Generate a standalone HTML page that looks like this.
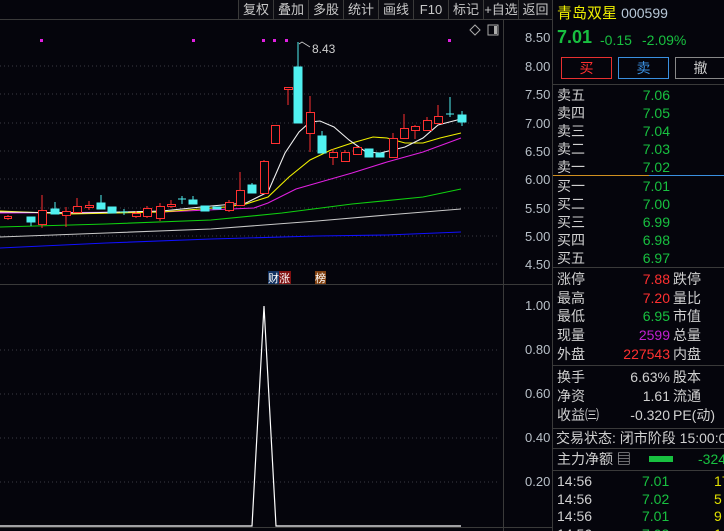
<!DOCTYPE html>
<html><head><meta charset="utf-8"><style>
*{margin:0;padding:0;box-sizing:border-box}
html,body{width:724px;height:531px;overflow:hidden}
body{background:#05050c;position:relative;font-family:"Liberation Sans","Noto Sans CJK SC",sans-serif;color:#c8c8c8}
.a{position:absolute;white-space:nowrap}
.tb{position:absolute;top:0;height:19px;font-size:13px;line-height:19px;text-align:center;color:#c8c8c8;border-left:1px solid #3a3a3a;background:#0c0c12}
.r{position:absolute;font-size:14px;line-height:16px;white-space:nowrap}
.g{color:#18c040}.rd{color:#ff3030}.w{color:#d0d0d0}
</style></head><body>
<div class="tb" style="left:238px;width:35px">复权</div>
<div class="tb" style="left:273px;width:35px">叠加</div>
<div class="tb" style="left:308px;width:35px">多股</div>
<div class="tb" style="left:343px;width:35px">统计</div>
<div class="tb" style="left:378px;width:35px">画线</div>
<div class="tb" style="left:413px;width:35px">F10</div>
<div class="tb" style="left:448px;width:35px">标记</div>
<div class="tb" style="left:483px;width:35px">+自选</div>
<div class="tb" style="left:518px;width:34px">返回</div>
<svg class="a" style="left:0;top:0" width="552" height="531">
<line x1="0" y1="19.5" x2="552" y2="19.5" stroke="#3a3a3a"/>
<line x1="503.5" y1="19" x2="503.5" y2="531" stroke="#3a3a3a"/>
<line x1="0" y1="284.5" x2="552" y2="284.5" stroke="#3a3a3a"/>
<line x1="0" y1="527.5" x2="552" y2="527.5" stroke="#3a3a3a"/>
<g stroke="#3a3a44" stroke-dasharray="1,3">
<line x1="0" y1="66" x2="500" y2="66"/><line x1="0" y1="94" x2="500" y2="94"/><line x1="0" y1="123" x2="500" y2="123"/><line x1="0" y1="151" x2="500" y2="151"/><line x1="0" y1="179" x2="500" y2="179"/><line x1="0" y1="208" x2="500" y2="208"/><line x1="0" y1="236" x2="500" y2="236"/><line x1="0" y1="264" x2="500" y2="264"/>
<line x1="0" y1="350" x2="500" y2="350"/><line x1="0" y1="394" x2="500" y2="394"/><line x1="0" y1="438" x2="500" y2="438"/><line x1="0" y1="482" x2="500" y2="482"/>
</g>
<g font-size="13" fill="#b8c0c8" font-family="Liberation Sans">
<text x="525" y="42">8.50</text><text x="525" y="71">8.00</text><text x="525" y="99">7.50</text><text x="525" y="128">7.00</text><text x="525" y="156">6.50</text><text x="525" y="184">6.00</text><text x="525" y="213">5.50</text><text x="525" y="241">5.00</text><text x="525" y="269">4.50</text>
<text x="525" y="310">1.00</text><text x="525" y="354">0.80</text><text x="525" y="398">0.60</text><text x="525" y="442">0.40</text><text x="525" y="486">0.20</text>
</g>
<g fill="#e020e0"><rect x="40" y="39" width="3" height="3"/><rect x="192" y="39" width="3" height="3"/><rect x="262" y="39" width="3" height="3"/><rect x="273" y="39" width="3" height="3"/><rect x="285" y="39" width="3" height="3"/><rect x="448" y="39" width="3" height="3"/></g>
<path d="M470 30l5 -5 5 5 -5 5z" fill="none" stroke="#aaa"/>
<rect x="488" y="25" width="10" height="10" fill="none" stroke="#aaa"/><rect x="494" y="26" width="3" height="8" fill="#aaa"/>
<text x="312" y="53" font-size="12" fill="#d0d0d0">8.43</text>
<path d="M299 44l3-2 8 5" fill="none" stroke="#ccc" stroke-width="0.8"/>
<g fill="none" stroke-width="1.1">
<polyline stroke="#1010ff" points="0,248 106,243 211,239 317,236 387,235 461,232"/>
<polyline stroke="#c8c8c8" points="0,237 106,233 211,229 317,221 387,215 461,209"/>
<polyline stroke="#10d010" points="0,227 106,224 211,220 282,213 352,204 423,197 461,189"/>
<polyline stroke="#e020e0" points="0,213 162,212 254,208 268,203 296,189 317,183 352,173 387,162 423,152 461,138"/>
<polyline stroke="#f0f000" points="0,211 70,214 162,212 225,207 246,204 268,197 289,177 310,160 331,150 352,143 373,137 387,138 405,143 423,143 440,138 461,133"/>
<polyline stroke="#f0f0f0" points="0,212 81,213 162,211 211,206 246,203 268,192 285,153 299,132 310,122 320,121 334,127 349,140 366,152 380,153 405,147 423,138 438,125 461,119"/>
</g>
<g stroke="#ff3030" fill="#05050c" stroke-width="1">
<path d="M8 215v5M42 195v33M66 207v20M77 198v14M89 201v9M136 211v7M147 206v12M160 203v18M171 200v8M229 200v12M240 172v34M264 160v34M288 88v17M310 96v56M333 149v16M345 150v12M357 146v9M393 133v25M404 114v25M415 125v14M427 117v14M438 105v18"/>
<rect x="4.5" y="216.5" width="7" height="2"/><rect x="38.5" y="210.5" width="8" height="14"/><rect x="62.5" y="211.5" width="8" height="4"/><rect x="73.5" y="206.5" width="8" height="6"/><rect x="85.5" y="205.5" width="8" height="2"/><rect x="132.5" y="213.5" width="8" height="3"/><rect x="143.5" y="208.5" width="8" height="8"/><rect x="156.5" y="206.5" width="8" height="12"/><rect x="167.5" y="204.5" width="8" height="2"/>
<rect x="225.5" y="202.5" width="8" height="8"/><rect x="236.5" y="190.5" width="8" height="15"/><rect x="260.5" y="161.5" width="8" height="32"/><rect x="271.5" y="125.5" width="8" height="18"/><rect x="284.5" y="87.5" width="8" height="2"/><rect x="306.5" y="112.5" width="8" height="21"/><rect x="329.5" y="152.5" width="8" height="5"/><rect x="341.5" y="152.5" width="8" height="9"/><rect x="353.5" y="147.5" width="8" height="7"/><rect x="389.5" y="138.5" width="8" height="19"/><rect x="400.5" y="128.5" width="8" height="10"/><rect x="411.5" y="126.5" width="8" height="4"/><rect x="423.5" y="120.5" width="8" height="10"/><rect x="434.5" y="116.5" width="8" height="7"/>
</g>
<g stroke="#50f0f0" fill="#50f0f0" stroke-width="1">
<path d="M31 217v9M55 202v12M101 195v14M112 207v6M124 209v6M120 212h8M182 196v8M178 199h8M193 196v8M205 206v5M217 207v2M252 183v10M298 42v25M322 131v22M369 149v8M380 153v4M450 97v20M446 114h8M462 111v15"/>
<rect x="27" y="217" width="8" height="5"/><rect x="51" y="209" width="8" height="5"/><rect x="97" y="203" width="8" height="6"/><rect x="108" y="207" width="8" height="6"/><rect x="189" y="200" width="8" height="4"/><rect x="201" y="206" width="8" height="5"/><rect x="213" y="207" width="8" height="2"/><rect x="248" y="185" width="8" height="8"/><rect x="294" y="67" width="8" height="56"/><rect x="318" y="136" width="8" height="17"/><rect x="365" y="149" width="8" height="8"/><rect x="376" y="153" width="8" height="4"/><rect x="458" y="115" width="8" height="7"/>
</g>
<rect x="268" y="271" width="11" height="13" fill="#103060"/><text x="268" y="282" font-size="11" fill="#fff">财</text>
<rect x="279" y="271" width="12" height="13" fill="#801010"/><text x="279" y="282" font-size="11" fill="#fff">涨</text>
<rect x="315" y="271" width="11" height="13" fill="#804010"/><text x="315" y="282" font-size="11" fill="#fff">榜</text>
<polyline fill="none" stroke="#fff" stroke-width="1.2" points="0,526 252,526 264,306 276,526 461,526"/>
</svg>
<div class="a" style="left:552px;top:0;width:1px;height:531px;background:#3a3a3a"></div>
<div class="r" style="left:557px;top:5px;font-size:15px;color:#f0f000">青岛双星 <span style="color:#b8c8d8;font-size:14px">000599</span></div>
<div class="r" style="left:557px;top:29px;font-size:18px;font-weight:bold;color:#18c040">7.01</div>
<div class="r g" style="left:600px;top:32px">-0.15</div>
<div class="r g" style="left:642px;top:32px">-2.09%</div>
<div class="a" style="left:561px;top:57px;width:51px;height:22px;border:1px solid #e83030;color:#ff3030;font-size:14px;text-align:center;line-height:20px">买</div>
<div class="a" style="left:618px;top:57px;width:51px;height:22px;border:1px solid #3a90e0;color:#3a90e0;font-size:14px;text-align:center;line-height:20px">卖</div>
<div class="a" style="left:675px;top:57px;width:51px;height:22px;border:1px solid #888;color:#ccc;font-size:14px;text-align:center;line-height:20px">撤</div>
<div class="a" style="left:553px;top:84px;width:171px;height:1px;background:#3a3a3a"></div>
<div class="a" style="left:553px;top:175px;width:96px;height:1px;background:#d09020"></div>
<div class="a" style="left:649px;top:175px;width:75px;height:1px;background:#3a90e0"></div>
<div class="a" style="left:553px;top:267px;width:171px;height:1px;background:#3a3a3a"></div>
<div class="a" style="left:553px;top:365px;width:171px;height:1px;background:#3a3a3a"></div>
<div class="a" style="left:553px;top:428px;width:171px;height:1px;background:#3a3a3a"></div>
<div class="a" style="left:553px;top:448px;width:171px;height:1px;background:#3a3a3a"></div>
<div class="a" style="left:553px;top:470px;width:171px;height:1px;background:#3a3a3a"></div>
<div class="r w" style="left:557px;top:86px;line-height:18px">卖五<br>卖四<br>卖三<br>卖二<br>卖一</div>
<div class="r g" style="left:610px;top:86px;width:60px;text-align:right;line-height:18px">7.06<br>7.05<br>7.04<br>7.03<br>7.02</div>
<div class="r w" style="left:557px;top:177px;line-height:18px">买一<br>买二<br>买三<br>买四<br>买五</div>
<div class="r g" style="left:610px;top:177px;width:60px;text-align:right;line-height:18px">7.01<br>7.00<br>6.99<br>6.98<br>6.97</div>
<div class="r w" style="left:557px;top:270px;line-height:18.7px">涨停<br>最高<br>最低<br>现量<br>外盘</div>
<div class="r" style="left:590px;top:270px;width:80px;text-align:right;line-height:18.7px"><span class="rd">7.88</span><br><span class="rd">7.20</span><br><span class="g">6.95</span><br><span style="color:#c020d0">2599</span><br><span class="rd">227543</span></div>
<div class="r w" style="left:673px;top:270px;line-height:18.7px">跌停<br>量比<br>市值<br>总量<br>内盘</div>
<div class="r w" style="left:557px;top:368px;line-height:19px">换手<br>净资<br>收益㈢</div>
<div class="r w" style="left:590px;top:368px;width:80px;text-align:right;line-height:19px">6.63%<br>1.61<br>-0.320</div>
<div class="r w" style="left:673px;top:368px;line-height:19px">股本<br>流通<br>PE(动)</div>
<div class="r w" style="left:556px;top:430px">交易状态: 闭市阶段 15:00:0</div>
<div class="r w" style="left:557px;top:451px">主力净额 ▤</div>
<div class="a" style="left:649px;top:456px;width:24px;height:6px;background:#18c040"></div>
<div class="r g" style="left:698px;top:451px">-324</div>
<div class="r w" style="left:557px;top:473px;line-height:17.6px">14:56<br>14:56<br>14:56<br>14:56</div>
<div class="r g" style="left:642px;top:473px;line-height:17.6px">7.01<br>7.02<br>7.01<br>7.02</div>
<div class="r" style="left:714px;top:473px;line-height:17.6px;color:#e0e000">17<br>5<br>9<br>1</div>
</body></html>
